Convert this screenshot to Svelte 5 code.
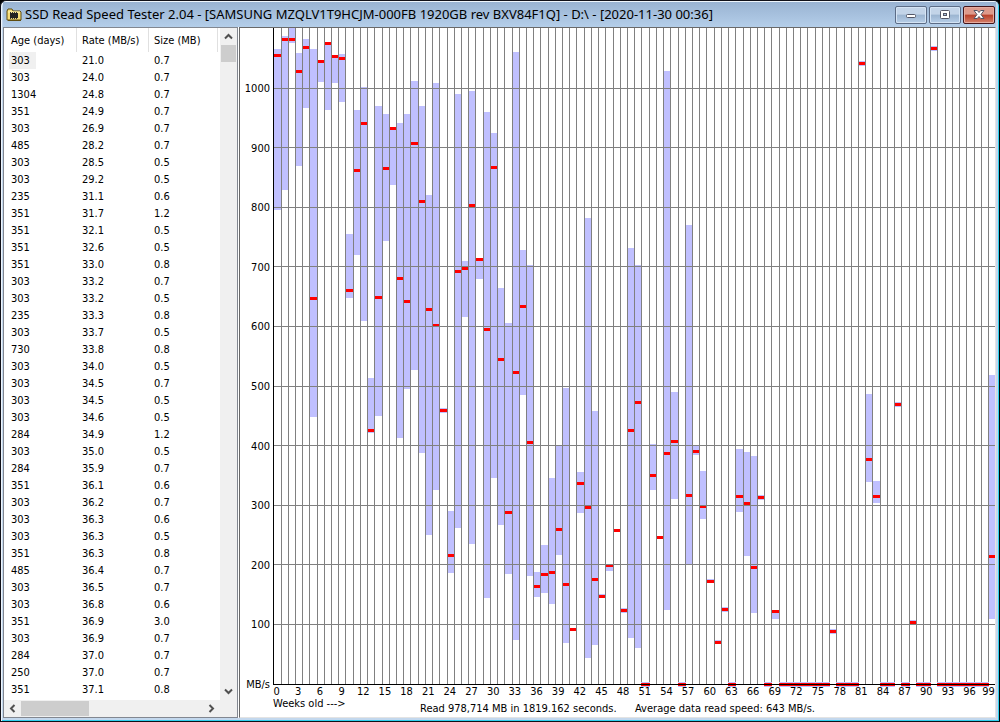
<script>
	const rows = [
		[303, '21.0', '0.7'], [303, '24.0', '0.7'], [1304, '24.8', '0.7'], [351, '24.9', '0.7'],
		[303, '26.9', '0.7'], [485, '28.2', '0.7'], [303, '28.5', '0.5'], [303, '29.2', '0.5'],
		[235, '31.1', '0.6'], [351, '31.7', '1.2'], [351, '32.1', '0.5'], [351, '32.6', '0.5'],
		[351, '33.0', '0.8'], [303, '33.2', '0.7'], [303, '33.2', '0.5'], [235, '33.3', '0.8'],
		[303, '33.7', '0.5'], [730, '33.8', '0.8'], [303, '34.0', '0.5'], [303, '34.5', '0.7'],
		[303, '34.5', '0.5'], [303, '34.6', '0.5'], [284, '34.9', '1.2'], [303, '35.0', '0.5'],
		[284, '35.9', '0.7'], [351, '36.1', '0.6'], [303, '36.2', '0.7'], [303, '36.3', '0.6'],
		[303, '36.3', '0.5'], [351, '36.3', '0.8'], [485, '36.4', '0.7'], [303, '36.5', '0.7'],
		[303, '36.8', '0.6'], [351, '36.9', '3.0'], [303, '36.9', '0.7'], [284, '37.0', '0.7'],
		[250, '37.0', '0.7'], [351, '37.1', '0.8']
	];

	// week, top of range, bottom of range, average (plot units, 684 = 0 MB/s)
	const weeks = [
		[0, 49, 210, 55], [1, 36, 190, 39], [2, 28, 43, 39], [3, 53, 166, 71], [4, 39, 108, 47],
		[5, 49, 417, 298], [6, 60, 82, 61], [7, 42, 110, 43], [8, 55, 83, 56], [9, 54, 102, 58],
		[10, 234, 298, 290], [11, 110, 255, 170], [12, 87, 321, 123], [13, 378, 433, 430],
		[14, 106, 416, 297], [15, 114, 241, 168], [16, 127, 185, 128], [17, 123, 438, 278],
		[18, 114, 389, 301], [19, 81, 370, 143], [20, 106, 453, 201], [21, 195, 535, 309],
		[22, 83, 490, 325], [23, 408, 413, 410], [24, 511, 573, 555], [25, 94, 528, 271],
		[26, 261, 317, 268], [27, 91, 544, 205], [28, 258, 279, 259], [29, 112, 598, 329],
		[30, 133, 478, 167], [31, 288, 525, 359], [32, 323, 574, 512], [33, 52, 640, 372],
		[34, 250, 395, 306], [35, 265, 576, 442], [36, 572, 597, 586], [37, 545, 593, 574],
		[38, 478, 604, 572], [39, 446, 555, 529], [40, 388, 643, 584], [41, 628, 631, 629],
		[42, 472, 513, 483], [43, 218, 658, 507], [44, 411, 645, 579], [45, 594, 598, 596],
		[46, 564, 571, 565], [47, 529, 532, 530], [48, 608, 613, 610], [49, 248, 638, 430],
		[50, 265, 648, 402], [52, 444, 490, 475], [53, 536, 539, 537], [54, 71, 610, 453],
		[55, 392, 499, 441], [57, 225, 564, 495], [58, 445, 455, 451], [59, 471, 519, 506],
		[60, 579, 583, 581], [61, 640, 644, 642], [62, 607, 612, 609], [64, 449, 512, 496],
		[65, 452, 556, 503], [66, 456, 613, 567], [67, 495, 500, 497], [69, 610, 619, 611],
		[77, 629, 634, 631], [81, 61, 66, 63], [82, 394, 482, 459], [83, 481, 503, 496],
		[86, 402, 407, 404], [88, 620, 624, 622], [91, 46, 51, 48], [99, 375, 619, 556]
	];

	// weeks without any data, [first, last]
	const empty = [
		[51, 51], [56, 56], [63, 63], [68, 68], [70, 76], [78, 80],
		[84, 85], [87, 87], [89, 90], [92, 98]
	];

	const weekX = (w) => (w === 0 ? 0 : Math.round(w * 7.219 + 0.285));
	const rateY = (r) => Math.floor(684 - r * 0.596);

	const columns = Array.from({ length: 100 }, (_, i) => i);
	const rates = [1000, 900, 800, 700, 600, 500, 400, 300, 200, 100];
	const title =
		'SSD Read Speed Tester 2.04 - [SAMSUNG MZQLV1T9HCJM-000FB 1920GB rev BXV84F1Q] - D:\\ - [2020-11-30 00:36]';
</script>

<div class="window">
	<header class="titlebar">
		<svg class="app-icon" width="16" height="14" viewBox="0 0 16 14">
			<path d="M1 3 L2 1 H6 L7 3 H14 L15 4 V12 H1 Z" fill="#f5dc78" stroke="#5e4c10" />
			<path d="M2 4 H14" stroke="#fff6b8" />
			<rect x="4" y="5" width="8" height="5" fill="#222" />
			<path d="M4.500 4V11M6.500 4V11M8.500 4V11M10.500 4V11" stroke="#333" stroke-dasharray="1 5" />
			<path d="M2 12.500H15" stroke="#5e4c10" />
		</svg>
		<h1>{title}</h1>
		<div class="controls">
			<button aria-label="Minimize">
				<svg width="12" height="12" viewBox="0 0 12 12">
					<rect x="1.500" y="5.500" width="9" height="3" rx="1" fill="#fff" stroke="#535666" />
				</svg>
			</button>
			<button aria-label="Maximize">
				<svg width="12" height="12" viewBox="0 0 12 12">
					<rect x="1.500" y="1.500" width="9" height="8" rx="1" fill="#fff" stroke="#535666" />
					<rect x="4.500" y="4.500" width="3" height="2" fill="#a9c0dc" stroke="#535666" />
				</svg>
			</button>
			<button class="close" aria-label="Close">
				<svg width="12" height="12" viewBox="0 0 12 12">
					<path d="M1 1.500H4.300L6 3.500L7.700 1.500H11L8 5.500L11 9.500H7.700L6 7.500L4.300 9.500H1L4 5.500Z" fill="#fff" stroke="#535666" />
				</svg>
			</button>
		</div>
	</header>

	<main>
		<section class="list">
			<div class="list-main">
				<div class="table-wrap">
					<table>
						<thead>
							<tr>
								<th class="age">Age (days)</th>
								<th class="rate">Rate (MB/s)</th>
								<th class="size">Size (MB)</th>
							</tr>
						</thead>
						<tbody>
							{#each rows as [age, rate, size], i}
								<tr>
									<td><span class:selected={i === 0}>{age}</span></td>
									<td>{rate}</td>
									<td>{size}</td>
								</tr>
							{/each}
						</tbody>
					</table>
				</div>
				<div class="scroll vertical">
					<button aria-label="Scroll up">
						<svg width="9" height="7" viewBox="0 0 9 7"><path d="M1 5.500L4.500 2L8 5.500" /></svg>
					</button>
					<div class="thumb"></div>
					<button class="end" aria-label="Scroll down">
						<svg width="9" height="7" viewBox="0 0 9 7"><path d="M1 1.500L4.500 5L8 1.500" /></svg>
					</button>
				</div>
			</div>
			<div class="scroll horizontal">
				<button aria-label="Scroll left">
					<svg width="7" height="9" viewBox="0 0 7 9"><path d="M5.500 1L2 4.500L5.500 8" /></svg>
				</button>
				<div class="thumb"></div>
				<button class="end" aria-label="Scroll right">
					<svg width="7" height="9" viewBox="0 0 7 9"><path d="M1.500 1L5 4.500L1.500 8" /></svg>
				</button>
			</div>
		</section>

		<section class="chart">
			<div class="graph">
				<div class="rates">
					{#each rates as rate}
						<span>{rate}</span>
					{/each}
					<span>MB/s</span>
				</div>
				<div class="plot">
					<svg viewBox="0 28 722 657" preserveAspectRatio="none" shape-rendering="crispEdges">
						{#each weeks as [w, top, bottom, avg]}
							<rect class="range" x={weekX(w)} y={top} width={weekX(w + 1) - weekX(w)} height={bottom - top} />
							<rect class="avg" x={weekX(w)} y={avg - 1} width={weekX(w + 1) - weekX(w)} height="3" />
						{/each}
						{#each columns.slice(1) as w}
							<rect class="grid" x={weekX(w)} y="28" width="1" height="656" />
						{/each}
						{#each rates as rate}
							<rect class="grid" x="0" y={rateY(rate)} width="722" height="1" />
						{/each}
						{#each empty as [from, to]}
							<rect class="range" x={weekX(from)} y="682" width={weekX(to + 1) - weekX(from) + 1} height="5" />
							<rect class="avg" x={weekX(from)} y="683" width={weekX(to + 1) - weekX(from) + 1} height="3" />
						{/each}
						<rect x="0" y="28" width="1" height="657" />
						<rect x="0" y="684" width="722" height="1" />
					</svg>
				</div>
			</div>
			<div class="weeks">
				{#each columns as w}
					<span>{w % 3 === 0 ? w : ''}</span>
				{/each}
			</div>
			<footer>
				<span class="axis-name">Weeks old ---&gt;</span>
				<span class="read">Read 978,714 MB in 1819.162 seconds.</span>
				<span>Average data read speed: 643 MB/s.</span>
			</footer>
		</section>
	</main>
</div>

<style>
	:global(body) {
		background: #000;
	}

	.window {
		display: flex;
		flex-direction: column;
		box-sizing: border-box;
		height: 100vh;
		padding: 1px 3px 3px 2px;
		border: 1px solid #101018;
		border-right-color: #000;
		border-radius: 6px 6px 0 0;
		background: #c3d8ee;
		box-shadow: inset 1px 1px 0 #eef5fc, inset -1px -1px 0 #2fd0ee;
		font: 11px/17px "DejaVu Sans Condensed", Tahoma, "Noto Sans", sans-serif;
		color: #000;
		overflow: hidden;
	}

	.titlebar {
		display: flex;
		align-items: center;
		flex: none;
		height: 25px;
		padding: 0 0 0 3px;
		background: linear-gradient(#99b3d2, #b4cee9);
	}

	.app-icon {
		flex: none;
	}

	h1 {
		flex: 1;
		margin: 0 0 0 3px;
		font: 13px/25px "Noto Sans", sans-serif;
		white-space: nowrap;
		overflow: hidden;
	}

	.controls {
		display: flex;
		gap: 2px;
		padding-right: 1px;
	}

	.controls button {
		display: flex;
		align-items: center;
		justify-content: center;
		width: 32px;
		height: 18px;
		padding: 0;
		border: 1px solid #5c6c86;
		border-radius: 2px;
		background: linear-gradient(#c3d4e8 45%, #9bb4d0 50%, #b7cfe8);
		box-shadow: inset 0 0 0 1px #d5e4f4;
	}

	.controls .close {
		border-color: #43141a;
		background: linear-gradient(#dd9a8c 45%, #b8402a 50%, #d4806a);
		box-shadow: inset 0 0 0 1px #e6ac9f;
	}

	main {
		display: flex;
		flex: 1;
		min-height: 0;
		background: #fff;
	}

	.list {
		display: flex;
		flex-direction: column;
		flex: none;
		width: 235px;
		box-sizing: border-box;
		border: 1px solid #828790;
	}

	.list-main {
		display: flex;
		flex: 1;
		min-height: 0;
	}

	.table-wrap {
		flex: 1;
		overflow: hidden;
	}

	table {
		width: 214px;
		table-layout: fixed;
		border-spacing: 0;
	}

	th,
	td {
		box-sizing: border-box;
		padding: 0 0 0 5px;
		font-weight: normal;
		text-align: left;
		white-space: nowrap;
	}

	th:first-child,
	td:first-child {
		padding-left: 7px;
	}

	th {
		height: 24px;
		border-right: 1px solid #e0e0e0;
	}

	.age {
		width: 73px;
	}

	.rate {
		width: 72px;
	}

	.size {
		width: 69px;
	}

	td {
		height: 17px;
	}

	td span {
		display: block;
		width: max-content;
		margin-left: -2px;
		padding: 0 6px 0 2px;
	}

	.selected {
		background: #f0f0f0;
	}

	.scroll {
		display: flex;
		flex: none;
		background: #f0f0f0;
	}

	.scroll button {
		display: flex;
		align-items: center;
		justify-content: center;
		width: 17px;
		height: 17px;
		padding: 0;
		border: 0;
		background: none;
	}

	.scroll path {
		fill: none;
		stroke: #505050;
		stroke-width: 2;
	}

	.scroll .thumb {
		background: #cdcdcd;
	}

	.scroll .end {
		margin: auto 0 0;
	}

	.vertical {
		flex-direction: column;
		align-items: center;
		width: 17px;
	}

	.vertical .thumb {
		width: 15px;
		height: 17px;
	}

	.horizontal {
		align-items: center;
		height: 17px;
		padding-right: 17px;
	}

	.horizontal .thumb {
		width: 68px;
		height: 15px;
	}

	.horizontal .end {
		margin: 0 0 0 auto;
	}

	.chart {
		display: flex;
		flex-direction: column;
		flex: 1;
		min-width: 0;
		margin-left: 1px;
		border: 1px solid #e3e3e3;
		border-top-color: #696969;
		border-left-color: #696969;
	}

	.graph {
		display: flex;
		flex: 1;
		min-height: 0;
	}

	.rates {
		display: flex;
		flex-direction: column;
		justify-content: space-between;
		flex: none;
		width: 30px;
		padding: 60px 3px 0 0;
		text-align: right;
	}

	.rates span {
		height: 1px;
		line-height: 1px;
	}

	.plot {
		flex: 1;
		min-width: 0;
	}

	.plot svg {
		display: block;
		width: 100%;
		height: 100%;
		overflow: visible;
	}

	.range {
		fill: #c0c0ff;
	}

	.avg {
		fill: #f00;
	}

	.grid {
		fill: #808080;
	}

	.weeks {
		display: flex;
		flex: none;
		height: 12px;
		margin-left: 33px;
		line-height: 13px;
	}

	.weeks span {
		display: flex;
		justify-content: center;
		flex: 1;
		width: 0;
		min-width: 0;
	}

	.weeks span:last-child {
		justify-content: flex-end;
	}

	footer {
		display: flex;
		align-items: flex-end;
		flex: none;
		height: 20px;
		margin-left: 33px;
		line-height: 17px;
		white-space: nowrap;
	}

	.axis-name {
		align-self: flex-start;
		width: 147px;
		line-height: 14px;
	}

	.read {
		width: 215px;
	}
</style>
